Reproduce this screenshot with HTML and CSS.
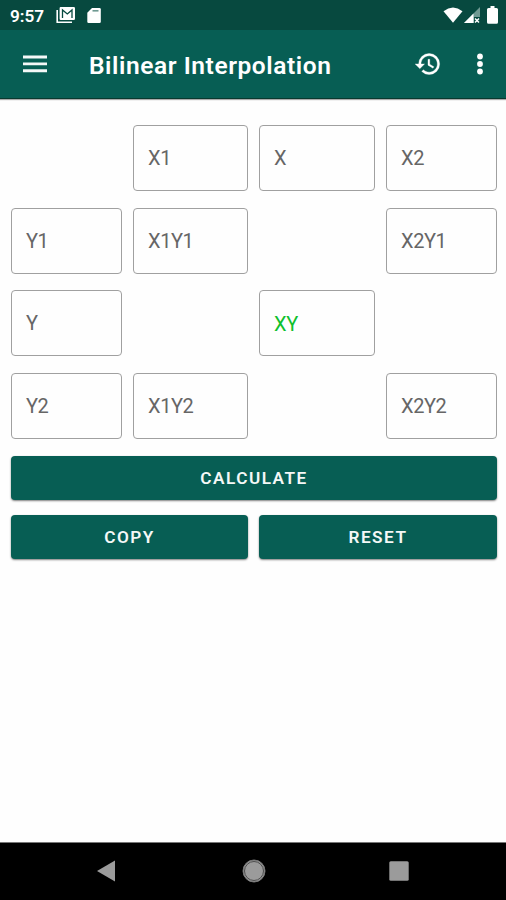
FILE: index.html
```html
<!DOCTYPE html>
<html lang="en">
<head>
<meta charset="utf-8">
<title>Bilinear Interpolation</title>
<link rel="stylesheet" href="styles.css">
</head>
<body>
<div class="screen">
  <div class="status">
    <span class="clock">9:57</span>
    <svg class="mail" width="20" height="18" viewBox="0 0 20 18"><path d="M1.200 4v12.200H16" fill="none" stroke="#fff" stroke-width="1.600"/><path fill="#fff" d="M4.800 1h13a1.200 1.200 0 0 1 1.200 1.200v10.600a1.200 1.200 0 0 1-1.200 1.200h-13a1.200 1.200 0 0 1-1.200-1.200V2.200A1.200 1.200 0 0 1 4.800 1z"/><path d="M6.500 12V4l4.800 4L16 4v8" fill="none" stroke="#07493f" stroke-width="1.300"/></svg>
    <svg class="card" width="14" height="17" viewBox="0 0 14 17"><path fill="#fff" d="M5 1h7.500q1.300 0 1.300 1.300v12.400q0 1.300-1.300 1.300h-11Q.3 16 .3 14.700V5.800z"/><path d="M5.500 3.800h6" stroke="#6f9992" stroke-width="1.600"/></svg>
    <span class="grow"></span>
    <svg class="wifi" width="20" height="16" viewBox="0 0 20 16"><path fill="#fff" d="M.5 4.200Q10-3.200 19.500 4.200L10 15.800z"/></svg>
    <svg class="signal" width="16" height="17" viewBox="0 0 16 17"><path fill="#6f9992" d="M16 0v16H0z"/><path fill="#fff" d="M9.500 6.500V16H0z"/><path fill="#07493f" d="M10 10h6v7h-6z"/><path d="m11 11.500 4 4m0-4-4 4" stroke="#fff" stroke-width="1.500"/></svg>
    <svg class="battery" width="11" height="18" viewBox="0 0 11 18"><path fill="#fff" d="M3.500 0h4v2h2q1.500 0 1.500 1.500v12.700q0 1.500-1.500 1.500h-8Q0 17.700 0 16.200V3.500Q0 2 1.500 2h2z"/></svg>
  </div>
  <div class="appbar">
    <svg class="menu" width="24" height="18" viewBox="0 0 24 18"><path d="M0 2h24M0 8.900h24M0 15.800h24" stroke="#f4f8f7" stroke-width="2.900"/></svg>
    <h1 class="title">Bilinear Interpolation</h1>
    <svg class="history" width="28" height="28" viewBox="0 0 24 24"><path fill="#fff" stroke="#fff" stroke-width=".3" d="M13 3a9 9 0 0 0-9 9H1l3.890 3.890.07.14L9 12H6c0-3.870 3.130-7 7-7s7 3.130 7 7-3.130 7-7 7c-1.930 0-3.680-.79-4.940-2.060l-1.420 1.420A8.954 8.954 0 0 0 13 21a9 9 0 0 0 0-18zm-1 5v5l4.280 2.540.72-1.210-3.500-2.080V8H12z"/></svg>
    <svg class="more" width="6" height="22" viewBox="0 0 6 22"><g fill="#fff"><circle cx="3" cy="3.500" r="2.900"/><circle cx="3" cy="11" r="2.900"/><circle cx="3" cy="18.500" r="2.900"/></g></svg>
  </div>
  <main class="content">
    <div class="grid">
      <span></span><div class="field">X1</div><div class="field">X</div><div class="field">X2</div>
      <div class="field">Y1</div><div class="field">X1Y1</div><span></span><div class="field">X2Y1</div>
      <div class="field">Y</div><span></span><div class="field result">XY</div><span></span>
      <div class="field">Y2</div><div class="field">X1Y2</div><span></span><div class="field">X2Y2</div>
    </div>
    <div class="actions">
      <button class="btn wide">CALCULATE</button>
      <button class="btn">COPY</button>
      <button class="btn">RESET</button>
    </div>
  </main>
  <div class="navbar">
    <svg width="18" height="22" viewBox="0 0 18 22"><path fill="#9b9b9b" d="M18 .5v21L0 11z"/></svg>
    <svg class="home" width="24" height="24" viewBox="0 0 24 24"><circle cx="12" cy="12" r="11" fill="#9b9b9b" stroke="#777"/><circle cx="12" cy="12" r="9.500" fill="none" stroke="#444" stroke-width=".9"/></svg>
    <svg width="20" height="20" viewBox="0 0 20 20"><rect x=".3" y=".3" width="19.400" height="19.400" rx="1.500" fill="#9b9b9b"/></svg>
  </div>
</div>
</body>
</html>
```
FILE: styles.css
```css
* { box-sizing: border-box; }
body { margin: 0; font-family: Roboto, "Liberation Sans", sans-serif; background: #fefefe; }
svg { display: block; flex: none; }
.screen { width: 506px; height: 900px; display: flex; flex-direction: column; overflow: hidden; }
.status { height: 30px; flex: none; background: #07493f; display: flex; align-items: center; padding: 0 8px 0 10px; color: #fff; }
.clock { width: 46px; font-size: 17.200px; font-weight: 600; line-height: 30px; padding-top: 1px; }
.card { margin-left: 11px; }
.grow { flex: 1; }
.wifi { margin-right: 1px; }
.signal { margin-right: 7px; }
.appbar { height: 69px; flex: none; background: #075e54; border-bottom: 1px solid #08392f; display: flex; align-items: center; padding: 0 23px; color: #fff; box-shadow: 0 1px 1px #aaa; }
.title { margin: 0 auto 0 42px; font-size: 24.500px; font-weight: 600; letter-spacing: .57px; line-height: 30px; padding-top: 3px; white-space: nowrap; }
.history { margin-right: 35px; }
.content { flex: 1; padding: 26px 9px 0 11px; }
.grid { display: grid; grid-template-columns: 111px 115px 116px 111px; grid-auto-rows: 66px; gap: 16.600px 11px; }
.field { border: 1px solid #a0a0a0; border-radius: 4px; padding-left: 14px; display: flex; align-items: center; font-size: 20px; letter-spacing: -.4px; color: #666; }
.result { color: #0fc02c; padding-top: 1px; }
.actions { display: grid; grid-template-columns: 237px 238px; grid-auto-rows: 44px; gap: 15px 11px; margin-top: 17px; }
.btn { border: 0; border-radius: 4px; background: #075e54; color: #f4f8f7; font: 600 17.200px Roboto, "Liberation Sans", sans-serif; letter-spacing: 1.500px; padding: 1px 0 0; box-shadow: 0 1px 2px rgba(0,0,0,.5); }
.wide { grid-column: 1 / -1; }
.navbar { height: 58px; flex: none; background: #000; border-top: 1px solid #777; display: flex; align-items: center; justify-content: space-between; padding: 0 97px; padding-bottom: 1px; }
.home { margin-left: 4px; }
```
